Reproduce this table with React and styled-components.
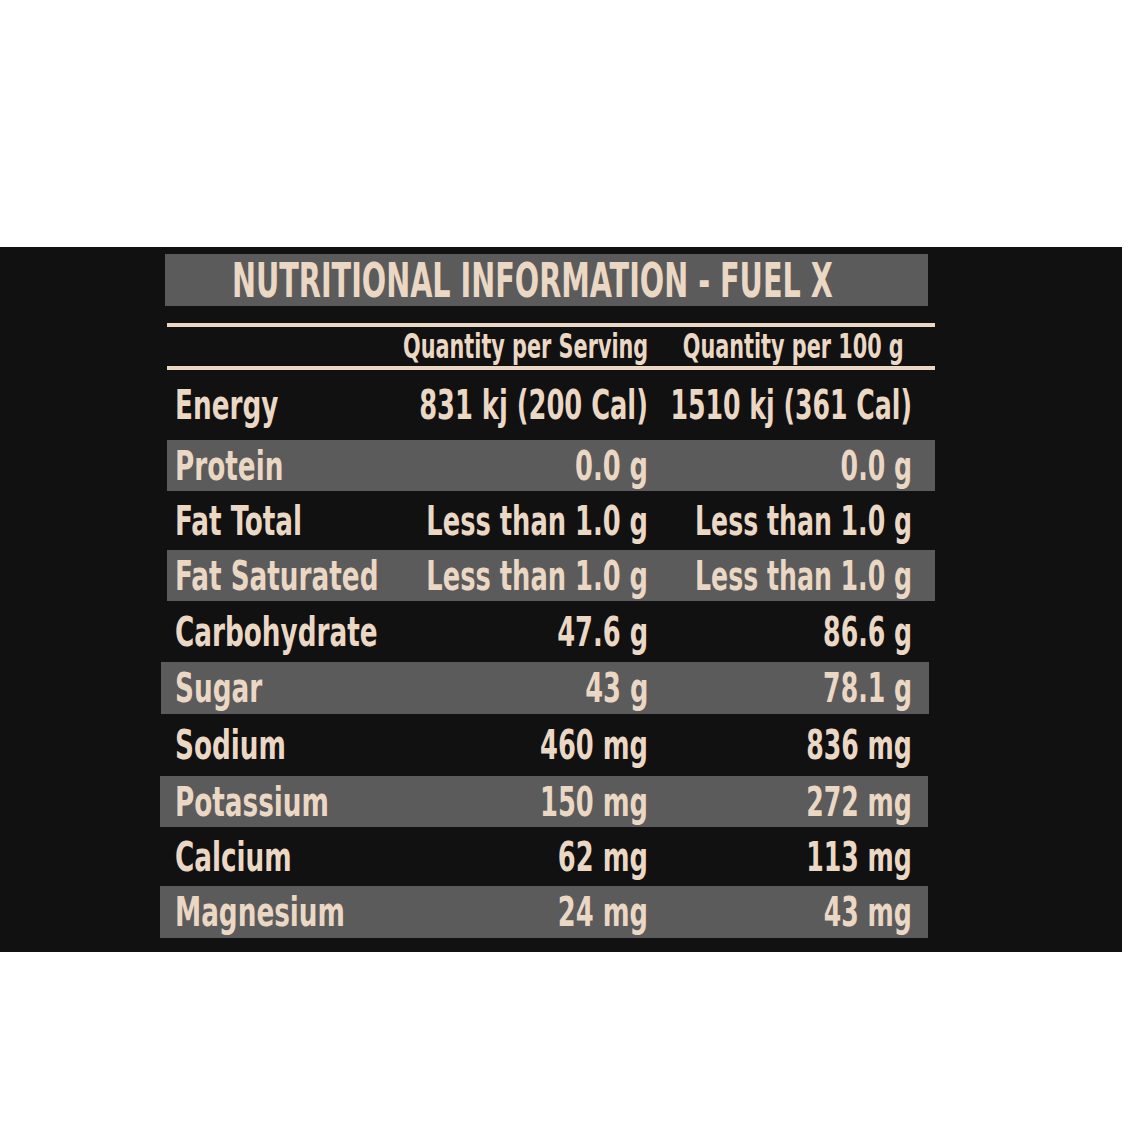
import React from "react";
import styled, { createGlobalStyle } from "styled-components";

const GlobalStyle = createGlobalStyle`
  html, body {
    margin: 0;
    padding: 0;
    background: #ffffff;
  }
`;

const BEIGE = "#ead7c4";
const GREY = "#5b5b5b";

const Page = styled.div`
  width: 1134px;
  height: 1134px;
  padding-top: 247px;
  box-sizing: border-box;
`;

const Band = styled.div`
  width: 1122px;
  height: 705px;
  background: #111111;
  padding: 7px 0 0 165px;
  box-sizing: border-box;
  font-family: "Liberation Sans Narrow", "DejaVu Sans Condensed", "Liberation Sans", sans-serif;
  font-weight: 700;
  color: ${BEIGE};
`;

const Panel = styled.div`
  width: 770px;
  display: flex;
  flex-direction: column;
`;

const Title = styled.div`
  width: 763px;
  height: 52px;
  background: ${GREY};
  display: flex;
  align-items: center;
  padding-left: 67px;
  box-sizing: border-box;
  font-size: 48px;
  line-height: 1;
`;

const Squeeze = styled.span`
  display: inline-block;
  flex: none;
  white-space: nowrap;
  transform: scaleX(${(p) => p.$sx || 0.74});
  transform-origin: ${(p) => (p.$right ? "right" : "left")} center;
`;

const Grid = styled.div`
  display: grid;
  grid-template-columns: 225px 248px 264px;
  align-items: center;
`;

const HeadRow = styled(Grid)`
  height: 39px;
  margin: 17px 0 0 2px;
  padding: 0 23px 0 8px;
  font-size: 33px;
  border-top: 4px solid ${BEIGE};
  border-bottom: 4px solid ${BEIGE};
`;

const Row = styled(Grid)`
  height: ${(p) => p.$h}px;
  margin-left: ${(p) => 2 - p.$shift}px;
  margin-right: ${(p) => p.$shift}px;
  padding: 0 ${(p) => 23 - p.$shift}px 0 ${(p) => 8 + p.$shift}px;
  background: ${(p) => (p.$shaded ? GREY : "transparent")};
  font-size: 40px;
  line-height: 1;
`;

const Label = styled.div`
  display: flex;
  justify-content: flex-start;
  min-width: 0;
`;

const Value = styled.div`
  display: flex;
  justify-content: flex-end;
  min-width: 0;
  padding-right: ${(p) => p.$pad || 0}px;
`;

const rows = [
  { name: "Energy", serving: "831 kj (200 Cal)", per100: "1510 kj (361 Cal)", h: 70, shift: 0 },
  { name: "Protein", serving: "0.0 g", per100: "0.0 g", h: 51, shift: 0 },
  { name: "Fat Total", serving: "Less than 1.0 g", per100: "Less than 1.0 g", h: 59, shift: 0 },
  { name: "Fat Saturated", serving: "Less than 1.0 g", per100: "Less than 1.0 g", h: 51, shift: 0 },
  { name: "Carbohydrate", serving: "47.6 g", per100: "86.6 g", h: 61, shift: 3 },
  { name: "Sugar", serving: "43 g", per100: "78.1 g", h: 52, shift: 6 },
  { name: "Sodium", serving: "460 mg", per100: "836 mg", h: 62, shift: 6 },
  { name: "Potassium", serving: "150 mg", per100: "272 mg", h: 51, shift: 7 },
  { name: "Calcium", serving: "62 mg", per100: "113 mg", h: 59, shift: 7 },
  { name: "Magnesium", serving: "24 mg", per100: "43 mg", h: 52, shift: 7 },
];

export default function App() {
  return (
    <Page>
      <GlobalStyle />
      <Band>
        <Panel>
          <Title>
            <Squeeze $sx={0.664}>NUTRITIONAL INFORMATION - FUEL X</Squeeze>
          </Title>
          <HeadRow>
            <span />
            <Value>
              <Squeeze $right $sx={0.7}>Quantity per Serving</Squeeze>
            </Value>
            <Value $pad={8}>
              <Squeeze $right $sx={0.7}>Quantity per 100 g</Squeeze>
            </Value>
          </HeadRow>
          {rows.map((r, i) => (
            <Row key={r.name} $h={r.h} $shift={r.shift} $shaded={i % 2 === 1}>
              <Label>
                <Squeeze $sx={0.73}>{r.name}</Squeeze>
              </Label>
              <Value>
                <Squeeze $right $sx={0.715}>{r.serving}</Squeeze>
              </Value>
              <Value>
                <Squeeze $right $sx={0.7}>{r.per100}</Squeeze>
              </Value>
            </Row>
          ))}
        </Panel>
      </Band>
    </Page>
  );
}
